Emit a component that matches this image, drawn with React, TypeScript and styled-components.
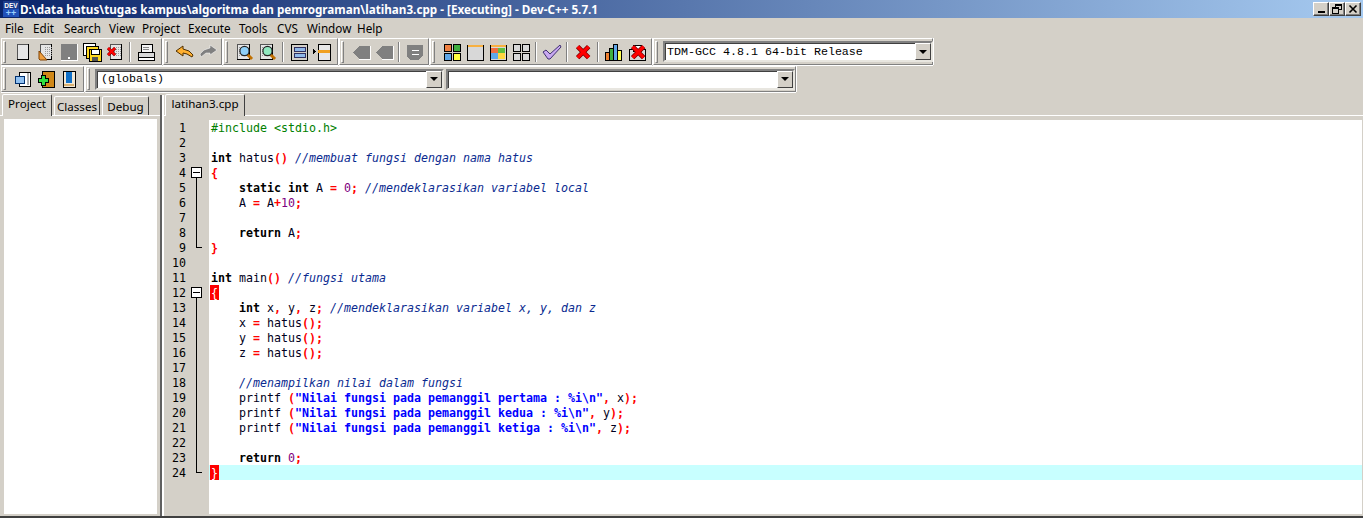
import React from "react";
import styled, { createGlobalStyle } from "styled-components";

const Global = createGlobalStyle`
  html, body { margin: 0; padding: 0; background: #d4d0c8; overflow: hidden; }
`;

const UI = `"Noto Sans", "Liberation Sans", sans-serif`;
const FACE = "#d4d0c8";

const Win = styled.div`
  width: 1363px; height: 518px; display: flex; flex-direction: column;
  background: ${FACE}; overflow: hidden; font-family: ${UI};
`;
const TitleBar = styled.div`
  height: 18px; flex: none; display: flex; align-items: center; padding: 0 2px 0 3px;
  background: linear-gradient(90deg, #0a246a 0%, #a6caf0 100%);
`;
const TitleText = styled.span`
  flex: 1; margin-left: 1px; color: #fff; white-space: nowrap;
  font: bold 11.7px "Noto Sans", sans-serif; letter-spacing: 0; line-height: 18px;
`;
const WinBtn = styled.button`
  width: 16px; height: 14px; padding: 0; margin: 0 0 0 0; display: flex; align-items: center; justify-content: center;
  background: ${FACE}; border: 1px solid; border-color: #fff #404040 #404040 #fff;
  box-shadow: inset -1px -1px 0 #808080;
`;
const MenuBar = styled.div`
  height: 20px; flex: none; display: flex; align-items: center; padding: 0 0 0 5px;
`;
const MenuItem = styled.span<{ $w: number }>`
  width: ${(p) => p.$w}px; font-size: 11.7px; line-height: 20px; color: #000; white-space: nowrap;
`;
const ToolRow = styled.div<{ $h: number; $mb: number }>`
  height: ${(p) => p.$h}px; margin-bottom: ${(p) => p.$mb}px; flex: none; display: flex; padding-left: 1px;
`;
const ToolGroup = styled.div<{ $w: number }>`
  width: ${(p) => p.$w}px; box-sizing: border-box; display: flex; align-items: center;
  border: 1px solid; border-color: #fff #808080 #808080 #fff;
  box-shadow: 0 1px 0 #fff, 1px 0 0 #fff;
  margin-right: 1px;
`;
const Grip = styled.i`
  width: 1px; height: 20px; flex: none; margin: 0 5px 0 1px; background: ${FACE};
  border: 1px solid; border-color: #fff #808080 #808080 #fff;
`;
const Btn = styled.span`
  width: 23px; height: 22px; flex: none; display: flex; align-items: center; justify-content: center;
`;
const Sep = styled.i`
  width: 1px; height: 20px; flex: none; margin: 0 3px 0 3px; background: #808080; border-right: 1px solid #fff;
`;
const Combo = styled.div<{ $w: number }>`
  width: ${(p) => p.$w}px; height: 21px; box-sizing: border-box; flex: none; display: flex; background: #fff;
  border: 2px solid; border-color: #808080 #e8e6e0 #e8e6e0 #808080;
  box-shadow: inset 1px 1px 0 #404040;
  margin-right: 2px;
`;
const ComboText = styled.span<{ $pad: number; $lh: number }>`
  flex: 1; padding-left: ${(p) => p.$pad}px; font: 11.67px/${(p) => p.$lh}px "Liberation Mono", monospace; color: #000; white-space: pre;
`;
const ComboBtn = styled.span`
  width: 16px; flex: none; box-sizing: border-box; background: ${FACE}; display: flex; align-items: center; justify-content: center;
  border: 1px solid; border-color: #fff #404040 #404040 #fff;
`;
const Arrow = styled.i`
  width: 0; height: 0; border: 4px solid transparent; border-top-color: #000; border-bottom-width: 0;
`;
const Main = styled.div`
  flex: 1; min-height: 0; display: flex; border-bottom: 2px solid #404040; margin-top: 1px;
`;
const Left = styled.div`
  width: 160px; flex: none; display: flex; flex-direction: column; border-right: 2px solid #606060;
  margin-right: 2px; box-shadow: 2px 0 0 #fff;
`;
const Tabs = styled.div<{ $pad: number }>`
  height: 21px; flex: none; display: flex; align-items: flex-end; padding-left: ${(p) => p.$pad}px; box-sizing: border-box; border-bottom: 1px solid #fff;
`;
const Tab = styled.span<{ $w: number; $active?: boolean }>`
  width: ${(p) => p.$w}px; height: ${(p) => (p.$active ? 22 : 19)}px; box-sizing: border-box; flex: none;
  margin-bottom: ${(p) => (p.$active ? -1 : 0)}px; margin-right: 2px;
  background: ${FACE}; text-align: center; font-size: 11.6px; color: #000;
  line-height: ${(p) => (p.$active ? 18 : 20)}px;
  border: 1px solid; border-bottom-width: 0; border-color: #fff #404040 transparent #fff; border-radius: 2px 2px 0 0;
  position: relative; z-index: 1;
`;
const LeftBody = styled.div`
  flex: 1; min-height: 0; margin: 3px 3px 2px 4px; background: #fff;
`;
const Right = styled.div`
  flex: 1; min-width: 0; display: flex; flex-direction: column;
`;
const Editor = styled.div`
  flex: 1; min-height: 0; display: flex; margin: 4px 1px 2px 0; background: #fff;
  font: 11.63px/17px "DejaVu Sans Mono", monospace;
`;
const Gutter = styled.div`
  width: 45px; flex: none; background: ${FACE};
`;
const GRow = styled.div`
  height: 15px; display: flex; color: #000;
`;
const LineNo = styled.span`
  width: 22px; flex: none; text-align: right;
`;
const Code = styled.div`
  flex: 1; min-width: 0;
`;
const CodeLine = styled.div<{ $hl?: boolean }>`
  height: 15px; padding-left: 2px; white-space: pre; background: ${(p) => (p.$hl ? "#c8ffff" : "transparent")}; color: #000;
`;
type Kind = "plain" | "kw" | "sym" | "num" | "str" | "com" | "pre" | "match";
const COLORS: Record<Kind, string> = {
  plain: "#000020", kw: "#000", sym: "#ff0000", num: "#800080", str: "#0000ff", com: "#0a2a90", pre: "#008000", match: "#fff",
};
const Tok = styled.span<{ $k: Kind }>`
  color: ${(p) => COLORS[p.$k]};
  font-weight: ${(p) => (["kw", "sym", "str"].includes(p.$k) ? "bold" : "normal")};
  font-style: ${(p) => (p.$k === "com" ? "italic" : "normal")};
  ${(p) => (p.$k === "match" ? "background:#ff0000;display:inline-block;width:9px;height:15px;margin-left:-1px;padding-left:1px;box-sizing:border-box;vertical-align:top;" : "")}
`;

const SRC = `#include <stdio.h>

int hatus() //membuat fungsi dengan nama hatus
{
    static int A = 0; //mendeklarasikan variabel local
    A = A+10;

    return A;
}

int main() //fungsi utama
{
    int x, y, z; //mendeklarasikan variabel x, y, dan z
    x = hatus();
    y = hatus();
    z = hatus();

    //menampilkan nilai dalam fungsi
    printf ("Nilai fungsi pada pemanggil pertama : %i\\n", x);
    printf ("Nilai fungsi pada pemanggil kedua : %i\\n", y);
    printf ("Nilai fungsi pada pemanggil ketiga : %i\\n", z);

    return 0;
}`.split("\n");

function tokens(line: string, i: number): [Kind, string][] {
  if (i === 11 || i === 23) return [["match", line]];
  if (line.startsWith("#")) return [["pre", line]];
  const out: [Kind, string][] = [];
  const re = /(\/\/.*$)|("[^"]*")|(\b(?:int|static|return)\b)|(\b\d+\b)|([(){};,=+])|(\s+|[A-Za-z_]\w*)/g;
  let m: RegExpExecArray | null;
  while ((m = re.exec(line))) {
    if (m[1]) out.push(["com", m[1]]);
    else if (m[2]) out.push(["str", m[2]]);
    else if (m[3]) out.push(["kw", m[3]]);
    else if (m[4]) out.push(["num", m[4]]);
    else if (m[5]) out.push(["sym", m[5]]);
    else out.push(["plain", m[6]]);
  }
  return out;
}

const foldOf = (n: number) => {
  if (n === 4 || n === 12) return "open";
  if (n === 9 || n === 24) return "end";
  if ((n > 4 && n < 9) || (n > 12 && n < 24)) return "line";
  return "";
};
const Fold = ({ t }: { t: string }) => (
  <svg width="23" height="15" shapeRendering="crispEdges" style={{ flex: "none" }}>
    {t === "open" && (
      <>
        <rect x="5.5" y="2.5" width="10" height="10" fill="#fff" stroke="#000" />
        <rect x="7" y="7" width="7" height="1" fill="#000" />
        <rect x="10" y="13" width="1" height="2" fill="#000" />
      </>
    )}
    {t === "line" && <rect x="10" y="0" width="1" height="15" fill="#000" />}
    {t === "end" && (
      <>
        <rect x="10" y="0" width="1" height="8" fill="#000" />
        <rect x="10" y="7" width="6" height="1" fill="#000" />
      </>
    )}
  </svg>
);

const S = ({ children, w = 20, h = 20 }: { children: React.ReactNode; w?: number; h?: number }) => (
  <svg width={w} height={h} viewBox={`0 0 ${w} ${h}`} shapeRendering="crispEdges">
    {children}
  </svg>
);
const Dots = ({ x, y }: { x: number; y: number }) => (
  <>
    {[0, 2, 4, 6, 8].map((j) =>
      [0, 2, 4, 6].map((k) => <rect key={`${j}${k}`} x={x + k} y={y + j} width="1" height="1" fill="#9a9a9a" />)
    )}
  </>
);
const Page = ({ x = 4, y = 2, w = 12, h = 16 }: { x?: number; y?: number; w?: number; h?: number }) => (
  <>
    <rect x={x} y={y} width={w} height={h} fill="#e6e6e6" />
    <rect x={x} y={y} width={w} height="1" fill="#555" />
    <rect x={x} y={y} width="1" height={h} fill="#555" />
    <rect x={x + w - 1} y={y} width="1" height={h} fill="#000" />
    <rect x={x} y={y + h - 1} width={w} height="1" fill="#000" />
  </>
);
const RedX = ({ x, y, s = 1 }: { x: number; y: number; s?: number }) => (
  <g transform={`translate(${x} ${y}) scale(${s})`} shapeRendering="auto">
    <path d="M1.5 1.5 L11.5 11.5 M11.5 1.5 L1.5 11.5" stroke="#7a0000" strokeWidth="4.4" fill="none" />
    <path d="M1.5 1.5 L11.5 11.5 M11.5 1.5 L1.5 11.5" stroke="#f00" strokeWidth="3" fill="none" />
  </g>
);
const Mag = ({ c }: { c: string }) => (
  <g shapeRendering="auto">
    <path d="M12 12 L17 17" stroke="#c07000" strokeWidth="3" />
    <circle cx="9.5" cy="9" r="4.6" fill={c} stroke="#222" strokeWidth="1.2" />
  </g>
);
const Gray = ({ x, y }: { x: number; y: number }) => (
  <rect x={x} y={y} width="7" height="7" fill="#d8d8d8" stroke="#000" />
);

const I = {
  New: () => <S><Page /></S>,
  Open: () => (
    <S>
      <Page />
      <Dots x={9} y={5} />
      <path d="M3 9 L11 18 L4 18 L3 17 Z" fill="#f0a040" stroke="#804000" shapeRendering="auto" />
    </S>
  ),
  Save: () => (
    <S>
      <rect x="2" y="2" width="16" height="16" fill="#808080" />
      <rect x="2" y="18" width="17" height="1" fill="#fff" />
      <rect x="18" y="2" width="1" height="17" fill="#fff" />
      <rect x="9" y="15" width="2" height="2" fill="#fff" />
    </S>
  ),
  SaveAll: () => (
    <S>
      <rect x="1" y="1" width="12" height="12" fill="#fff" stroke="#000" />
      <rect x="4" y="4" width="12" height="12" fill="#ffd820" stroke="#000" />
      <rect x="7" y="7" width="12" height="12" fill="#ffd820" stroke="#000" />
      <rect x="9" y="7" width="8" height="5" fill="#fff" stroke="#000" />
      <rect x="10" y="15" width="6" height="4" fill="#555" />
    </S>
  ),
  Close: () => (
    <S>
      <Page x={5} />
      <Dots x={9} y={5} />
      <RedX x={2} y={5} s={0.7} />
    </S>
  ),
  Print: () => (
    <S>
      <rect x="5" y="2" width="11" height="8" fill="#f4f4f4" stroke="#000" />
      <rect x="7" y="5" width="6" height="1" fill="#888" />
      <rect x="7" y="7" width="6" height="1" fill="#888" />
      <rect x="2" y="10" width="16" height="5" fill="#d8d8d8" stroke="#000" />
      <rect x="2" y="15" width="16" height="3" fill="#fff" stroke="#000" />
    </S>
  ),
  Undo: () => (
    <S>
      <path d="M1 9 L8 4 L8 7 L14 9 L18 13 L17 15 L12 12 L8 11 L8 14 Z" fill="#ffb030" stroke="#503000" shapeRendering="auto" />
    </S>
  ),
  Redo: () => (
    <S>
      <path d="M19 8 L12 3 L12 6 L6 8 L2 12 L3 15 L8 11 L12 11 L12 13 Z" fill="#808080" stroke="#fff" strokeWidth=".5" shapeRendering="auto" />
    </S>
  ),
  Find: ({ c = "#8fd0f8" }: { c?: string }) => (
    <S>
      <Page x={2} w={13} />
      <Dots x={4} y={5} />
      <Mag c={c} />
    </S>
  ),
  Panels: () => (
    <S>
      <rect x="2" y="2" width="16" height="16" fill="#d4d0c8" stroke="#000" />
      <rect x="5" y="5" width="11" height="4" fill="#90b8e8" stroke="#303060" />
      <rect x="5" y="11" width="11" height="4" fill="#90b8e8" stroke="#303060" />
    </S>
  ),
  Split: () => (
    <S>
      <rect x="6" y="2" width="12" height="16" fill="#e8e8e8" stroke="#000" />
      <rect x="6" y="8" width="12" height="3" fill="#f0a020" />
      <path d="M1 7 L4 10 L1 12 Z" fill="#000" />
    </S>
  ),
  FlagL: () => (
    <S>
      <path d="M2 10 L8 4 L19 4 L19 17 L8 17 Z" fill="#808080" />
      <rect x="8" y="17" width="12" height="1" fill="#fff" />
      <rect x="19" y="4" width="1" height="14" fill="#fff" />
    </S>
  ),
  Shield: () => (
    <S>
      <path d="M2 3 L18 3 L18 13 L13 18 L5 18 L2 14 Z" fill="#808080" />
      <rect x="7" y="8" width="7" height="1" fill="#fff" />
      <rect x="7" y="12" width="7" height="1" fill="#fff" />
    </S>
  ),
  Grid: () => (
    <S>
      <rect x="2" y="2" width="7" height="7" fill="#f08040" stroke="#000" />
      <rect x="11" y="2" width="7" height="7" fill="#40b040" stroke="#000" />
      <rect x="2" y="11" width="7" height="7" fill="#60a8e8" stroke="#000" />
      <rect x="11" y="11" width="7" height="7" fill="#ffff40" stroke="#000" />
    </S>
  ),
  Window: () => (
    <S>
      <rect x="2" y="3" width="16" height="15" fill="#d8d8d8" stroke="#000" />
      <rect x="3" y="3" width="15" height="2" fill="#f8b040" />
    </S>
  ),
  ColorWin: () => (
    <S>
      <rect x="2" y="3" width="16" height="15" fill="#d8d8d8" stroke="#000" />
      <rect x="3" y="3" width="15" height="2" fill="#f8b040" />
      <rect x="3" y="6" width="7" height="5" fill="#f07040" />
      <rect x="10" y="6" width="7" height="5" fill="#60c040" />
      <rect x="3" y="11" width="7" height="6" fill="#60a8e8" />
      <rect x="10" y="11" width="7" height="6" fill="#ffd840" />
    </S>
  ),
  GrayGrid: () => (
    <S>
      <Gray x={2} y={2} />
      <Gray x={11} y={2} />
      <Gray x={2} y={11} />
      <Gray x={11} y={11} />
    </S>
  ),
  Check: () => (
    <S>
      <path d="M1 10 L4 8 L8 12 L18 3 L19 5 L8 17 L6 17 Z" fill="#c8a8f0" stroke="#403070" shapeRendering="auto" />
    </S>
  ),
  X: () => <S><RedX x={3} y={3} s={1.1} /></S>,
  Chart: () => (
    <S>
      <rect x="1" y="10" width="4" height="8" fill="#f08030" stroke="#000" />
      <rect x="5" y="6" width="4" height="12" fill="#40b040" stroke="#000" />
      <rect x="9" y="2" width="4" height="16" fill="#60a8e8" stroke="#000" />
      <rect x="13" y="8" width="4" height="10" fill="#ffff50" stroke="#000" />
    </S>
  ),
  ChartX: () => (
    <S>
      <rect x="2" y="7" width="16" height="11" fill="#d8d8d8" stroke="#000" />
      <rect x="6" y="3" width="8" height="6" fill="#fff" stroke="#000" />
      <RedX x={4} y={3} s={1.1} />
    </S>
  ),
  Proj: () => (
    <S>
      <rect x="6" y="3" width="11" height="14" fill="#fff" stroke="#000" />
      <rect x="14" y="4" width="2" height="12" fill="#b0b0b0" />
      <rect x="2" y="7" width="9" height="7" fill="#90c0f0" stroke="#003070" />
    </S>
  ),
  Add: () => (
    <S>
      <rect x="6" y="2" width="12" height="16" fill="#d08818" stroke="#000" />
      <rect x="5" y="6" width="4" height="10" fill="#30e040" stroke="#000" />
      <rect x="2" y="9" width="10" height="4" fill="#30e040" stroke="#000" />
      <rect x="6" y="7" width="3" height="8" fill="#30e040" />
    </S>
  ),
  Book: () => (
    <S>
      <rect x="4" y="2" width="12" height="16" fill="#f0e8d8" stroke="#000" />
      <rect x="7" y="3" width="6" height="11" fill="#1070c8" />
      <rect x="5" y="15" width="10" height="2" fill="#d8b070" />
    </S>
  ),
};

const DevLogo = () => (
  <svg width="16" height="16" viewBox="0 0 16 16">
    <rect width="16" height="16" fill="#1c3c8c" />
    <rect y="8" width="16" height="8" fill="#2050b8" />
    <text x="8" y="6.5" textAnchor="middle" fontFamily="Liberation Sans" fontWeight="bold" fontSize="6.5" fill="#fff">DEV</text>
    <text x="8" y="14.5" textAnchor="middle" fontFamily="Liberation Sans" fontWeight="bold" fontSize="9" fill="#9ad0ff">++</text>
  </svg>
);

const menus: [string, number][] = [
  ["File", 28], ["Edit", 31], ["Search", 45], ["View", 33], ["Project", 46], ["Execute", 51],
  ["Tools", 38], ["CVS", 30], ["Window", 50], ["Help", 40],
];

export default function App() {
  return (
    <Win>
      <Global />
      <TitleBar>
        <DevLogo />
        <TitleText>D:\data hatus\tugas kampus\algoritma dan pemrograman\latihan3.cpp - [Executing] - Dev-C++ 5.7.1</TitleText>
        <WinBtn aria-label="minimize">
          <svg width="10" height="10" shapeRendering="crispEdges"><rect x="2" y="7" width="7" height="2" fill="#000" /></svg>
        </WinBtn>
        <WinBtn aria-label="restore">
          <svg width="10" height="10" shapeRendering="crispEdges">
            <rect x="3.5" y=".5" width="6" height="5" fill="none" stroke="#000" />
            <rect x="3" y="0" width="7" height="2" fill="#000" />
            <rect x=".5" y="3.5" width="6" height="6" fill={FACE} stroke="#000" />
            <rect x="0" y="3" width="7" height="2" fill="#000" />
          </svg>
        </WinBtn>
        <WinBtn aria-label="close">
          <svg width="10" height="10"><path d="M1.5 1.5 L8.5 8.5 M8.5 1.5 L1.5 8.5" stroke="#000" strokeWidth="1.6" /></svg>
        </WinBtn>
      </TitleBar>
      <MenuBar>
        {menus.map(([m, w]) => (
          <MenuItem key={m} $w={w}>{m}</MenuItem>
        ))}
      </MenuBar>
      <ToolRow $h={27} $mb={1}>
        <ToolGroup $w={161}>
          <Grip />
          <Btn><I.New /></Btn><Btn><I.Open /></Btn><Btn><I.Save /></Btn><Btn><I.SaveAll /></Btn><Btn><I.Close /></Btn>
          <Sep />
          <Btn><I.Print /></Btn>
        </ToolGroup>
        <ToolGroup $w={59}>
          <Grip />
          <Btn><I.Undo /></Btn><Btn><I.Redo /></Btn>
        </ToolGroup>
        <ToolGroup $w={115}>
          <Grip />
          <Btn><I.Find /></Btn><Btn><I.Find c="#90e8c0" /></Btn>
          <Sep />
          <Btn><I.Panels /></Btn><Btn><I.Split /></Btn>
        </ToolGroup>
        <ToolGroup $w={90}>
          <Grip />
          <Btn><I.FlagL /></Btn><Btn><I.FlagL /></Btn>
          <Sep />
          <Btn><I.Shield /></Btn>
        </ToolGroup>
        <ToolGroup $w={222}>
          <Grip />
          <Btn><I.Grid /></Btn><Btn><I.Window /></Btn><Btn><I.ColorWin /></Btn><Btn><I.GrayGrid /></Btn>
          <Sep />
          <Btn><I.Check /></Btn>
          <Sep />
          <Btn><I.X /></Btn>
          <Sep />
          <Btn><I.Chart /></Btn><Btn><I.ChartX /></Btn>
        </ToolGroup>
        <ToolGroup $w={280}>
          <Grip />
          <Combo $w={270}>
            <ComboText $pad={2} $lh={19}>TDM-GCC 4.8.1 64-bit Release</ComboText>
            <ComboBtn><Arrow /></ComboBtn>
          </Combo>
        </ToolGroup>
      </ToolRow>
      <ToolRow $h={26} $mb={2}>
        <ToolGroup $w={83}>
          <Grip />
          <Btn><I.Proj /></Btn><Btn><I.Add /></Btn><Btn><I.Book /></Btn>
        </ToolGroup>
        <ToolGroup $w={711}>
          <Grip />
          <Combo $w={349}>
            <ComboText $pad={4} $lh={17}>(globals)</ComboText>
            <ComboBtn><Arrow /></ComboBtn>
          </Combo>
          <Combo $w={349}>
            <ComboText $pad={4} $lh={17} />
            <ComboBtn><Arrow /></ComboBtn>
          </Combo>
        </ToolGroup>
      </ToolRow>
      <Main>
        <Left>
          <Tabs $pad={2}>
            <Tab $w={50} $active>Project</Tab>
            <Tab $w={46}>Classes</Tab>
            <Tab $w={47}>Debug</Tab>
          </Tabs>
          <LeftBody />
        </Left>
        <Right>
          <Tabs $pad={1}>
            <Tab $w={80} $active>latihan3.cpp</Tab>
          </Tabs>
          <Editor>
            <Gutter>
              {SRC.map((_, i) => (
                <GRow key={i}>
                  <LineNo>{i + 1}</LineNo>
                  <Fold t={foldOf(i + 1)} />
                </GRow>
              ))}
            </Gutter>
            <Code>
              {SRC.map((l, i) => (
                <CodeLine key={i} $hl={i === 23}>
                  {tokens(l, i).map(([k, t], j) => (
                    <Tok key={j} $k={k}>{t}</Tok>
                  ))}
                </CodeLine>
              ))}
            </Code>
          </Editor>
        </Right>
      </Main>
    </Win>
  );
}
